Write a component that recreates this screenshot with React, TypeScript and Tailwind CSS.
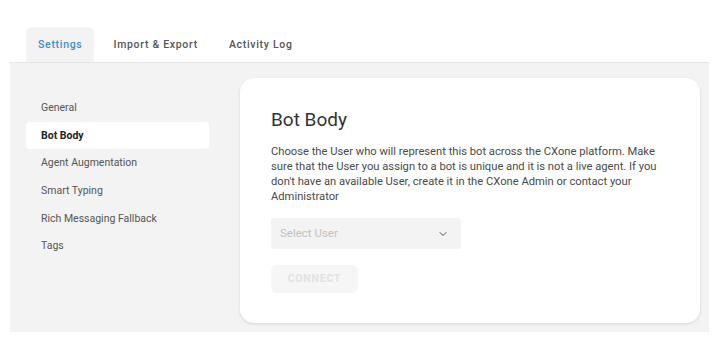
import { ChevronDown } from "lucide-react"

const menu = ["General", "Bot Body", "Agent Augmentation", "Smart Typing", "Rich Messaging Fallback", "Tags"]

export default function App() {
  return (
    <div className="w-[713px] h-[338px] bg-white font-['Roboto',sans-serif] overflow-hidden">
      {/* tabs */}
      <div className="flex items-end h-[62px] pl-[26px] pt-[27px] gap-[7px]">
        <div className="h-[35px] px-[12px] flex items-center rounded-t-[6px] bg-[#f3f3f3] text-[10.5px] font-medium tracking-[0.7px] text-[#3d8fce]">
          Settings
        </div>
        <div className="h-[35px] px-[12px] flex items-center text-[10.5px] font-medium tracking-[0.7px] text-[#555]">
          Import &amp; Export
        </div>
        <div className="h-[35px] px-[12px] flex items-center text-[10.5px] font-medium tracking-[0.7px] text-[#555]">
          Activity Log
        </div>
      </div>

      <div className="ml-[10px] w-[699px] h-[270px] bg-[#f3f3f3] border-t border-[#e6e6e6] flex">
        {/* sidebar */}
        <div className="pl-[16px] pt-[31px] w-[199px] shrink-0">
          {menu.map((m) => (
            <div
              key={m}
              className={
                m === "Bot Body"
                  ? "h-[27.7px] pl-[15px] flex items-center rounded-[4px] bg-white text-[10.5px] font-bold text-[#222]"
                  : "h-[27.7px] pl-[15px] flex items-center text-[10.5px] text-[#555]"
              }
            >
              {m}
            </div>
          ))}
        </div>

        {/* card */}
        <div className="ml-[31px] mt-[15px] w-[460px] h-[245px] bg-white rounded-[14px] shadow-[0_1px_3px_rgba(0,0,0,0.13)] px-[31px] pt-[30px]">
          <h1 className="text-[19px] leading-[24px] text-[#333]">Bot Body</h1>
          <p className="mt-[12px] text-[11.2px] leading-[15px] text-[#4a4a4a]">
            Choose the User who will represent this bot across the CXone platform. Make sure that the User you assign to a bot is unique and it is not a live agent. If you don't have an available User, create it in the CXone Admin or contact your Administrator
          </p>
          <div className="mt-[14px] w-[190px] h-[31px] rounded-[4px] bg-[#f3f3f3] flex items-center justify-between pl-[9px] pr-[12px]">
            <span className="text-[11.5px] text-[#c2c2c2]">Select User</span>
            <ChevronDown size={12} strokeWidth={2} className="text-[#555]" />
          </div>
          <button className="mt-[16px] w-[87px] h-[28px] rounded-[6px] bg-[#f6f6f6] text-[10.5px] font-bold tracking-[0.8px] text-[#e2e2e2]">
            CONNECT
          </button>
        </div>
      </div>
    </div>
  )
}
